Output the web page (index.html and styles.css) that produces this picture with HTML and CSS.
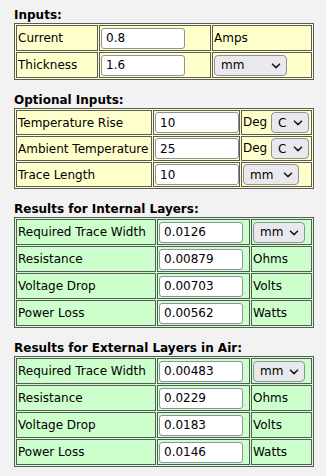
FILE: index.html
```html
<!DOCTYPE html>
<html>
<head>
<meta charset="utf-8">
<link rel="stylesheet" href="styles.css">
</head>
<body>
<div class="page">
  <section class="block">
    <div class="heading">Inputs:</div>
    <table class="calc inputs t1">
      <colgroup><col class="c1"><col class="c2"><col class="c3"></colgroup>
      <tr><td>Current</td><td><input class="num" type="text" value="0.8"></td><td>Amps</td></tr>
      <tr><td>Thickness</td><td><input class="num" type="text" value="1.6"></td><td><span class="sel w73"><select><option>mm</option></select><svg class="chev" viewBox="0 0 10 6"><path d="M1.5 1.2 L5 4.6 L8.5 1.2"/></svg></span></td></tr>
    </table>
  </section>

  <section class="block">
    <div class="heading">Optional Inputs:</div>
    <table class="calc inputs t2">
      <colgroup><col class="c1"><col class="c2"><col class="c3"></colgroup>
      <tr><td>Temperature Rise</td><td><input class="num" type="text" value="10"></td><td>Deg <span class="sel w38"><select><option>C</option></select><svg class="chev" viewBox="0 0 10 6"><path d="M1.5 1.2 L5 4.6 L8.5 1.2"/></svg></span></td></tr>
      <tr><td>Ambient Temperature</td><td><input class="num" type="text" value="25"></td><td>Deg <span class="sel w38"><select><option>C</option></select><svg class="chev" viewBox="0 0 10 6"><path d="M1.5 1.2 L5 4.6 L8.5 1.2"/></svg></span></td></tr>
      <tr><td>Trace Length</td><td><input class="num" type="text" value="10"></td><td><span class="sel w56"><select><option>mm</option></select><svg class="chev" viewBox="0 0 10 6"><path d="M1.5 1.2 L5 4.6 L8.5 1.2"/></svg></span></td></tr>
    </table>
  </section>

  <section class="block">
    <div class="heading">Results for Internal Layers:</div>
    <table class="calc results t3">
      <colgroup><col class="c1"><col class="c2"><col class="c3"></colgroup>
      <tr><td>Required Trace Width</td><td><input class="num" type="text" value="0.0126"></td><td><span class="sel w52"><select><option>mm</option></select><svg class="chev" viewBox="0 0 10 6"><path d="M1.5 1.2 L5 4.6 L8.5 1.2"/></svg></span></td></tr>
      <tr><td>Resistance</td><td><input class="num" type="text" value="0.00879"></td><td>Ohms</td></tr>
      <tr><td>Voltage Drop</td><td><input class="num" type="text" value="0.00703"></td><td>Volts</td></tr>
      <tr><td>Power Loss</td><td><input class="num" type="text" value="0.00562"></td><td>Watts</td></tr>
    </table>
  </section>

  <section class="block">
    <div class="heading">Results for External Layers in Air:</div>
    <table class="calc results t3">
      <colgroup><col class="c1"><col class="c2"><col class="c3"></colgroup>
      <tr><td>Required Trace Width</td><td><input class="num" type="text" value="0.00483"></td><td><span class="sel w52"><select><option>mm</option></select><svg class="chev" viewBox="0 0 10 6"><path d="M1.5 1.2 L5 4.6 L8.5 1.2"/></svg></span></td></tr>
      <tr><td>Resistance</td><td><input class="num" type="text" value="0.0229"></td><td>Ohms</td></tr>
      <tr><td>Voltage Drop</td><td><input class="num" type="text" value="0.0183"></td><td>Volts</td></tr>
      <tr><td>Power Loss</td><td><input class="num" type="text" value="0.0146"></td><td>Watts</td></tr>
    </table>
  </section>
</div>
</body>
</html>
```

FILE: styles.css
```css
html, body {
  margin: 0;
  padding: 0;
  background: #f2f2f2;
}

body {
  font-family: "DejaVu Sans", Verdana, sans-serif;
  font-size: 12px;
  color: #000;
}

.page {
  padding: 8px 12px 0 14px;
}

.block + .block {
  margin-top: 13px;
}

.heading {
  font-weight: bold;
  line-height: 15px;
}

.calc {
  width: 300px;
  table-layout: fixed;
  border-collapse: separate;
  border-spacing: 1px;
  border: 1px solid #5a5a5a;
}

.inputs {
  background: #ffffcc;
}

.results {
  background: #ccffcc;
}

.calc td {
  border: 1px solid #5a5a5a;
  padding: 1px;
  vertical-align: middle;
  white-space: nowrap;
  line-height: 14px;
  height: 22px;
}

.t2 td {
  height: 21px;
}

.t1 .c1 { width: 82px; }
.t1 .c2 { width: 112px; }
.t1 .c3 { width: 100px; }

.t2 .c1 { width: 136px; }
.t2 .c2 { width: 87px; }
.t2 .c3 { width: 71px; }

.t3 .c1 { width: 140px; }
.t3 .c2 { width: 93px; }
.t3 .c3 { width: 61px; }

.num {
  box-sizing: border-box;
  width: 84px;
  height: 21px;
  margin: 0;
  padding: 1px 4px;
  border: 1px solid #8f8f9d;
  border-radius: 3px;
  background: #fff;
  font-family: "DejaVu Sans", Verdana, sans-serif;
  font-size: 12px;
  color: #000;
  vertical-align: middle;
}

.sel {
  position: relative;
  display: inline-block;
  vertical-align: middle;
  height: 21px;
}

.sel select {
  -webkit-appearance: none;
  appearance: none;
  box-sizing: border-box;
  width: 100%;
  height: 21px;
  margin: 0;
  padding: 0 0 0 6px;
  border: 1px solid #8f8f9d;
  border-radius: 4px;
  background: #e9e9ed;
  font-family: "DejaVu Sans", Verdana, sans-serif;
  font-size: 12px;
  color: #000;
}

.chev {
  position: absolute;
  right: 6px;
  top: 8px;
  width: 10px;
  height: 6px;
  pointer-events: none;
}

.chev path {
  fill: none;
  stroke: #1c1b22;
  stroke-width: 1.6;
  stroke-linecap: round;
  stroke-linejoin: round;
}

.w73 { width: 73px; }
.w38 { width: 38px; }
.w56 { width: 56px; }
.w52 { width: 52px; }
```
